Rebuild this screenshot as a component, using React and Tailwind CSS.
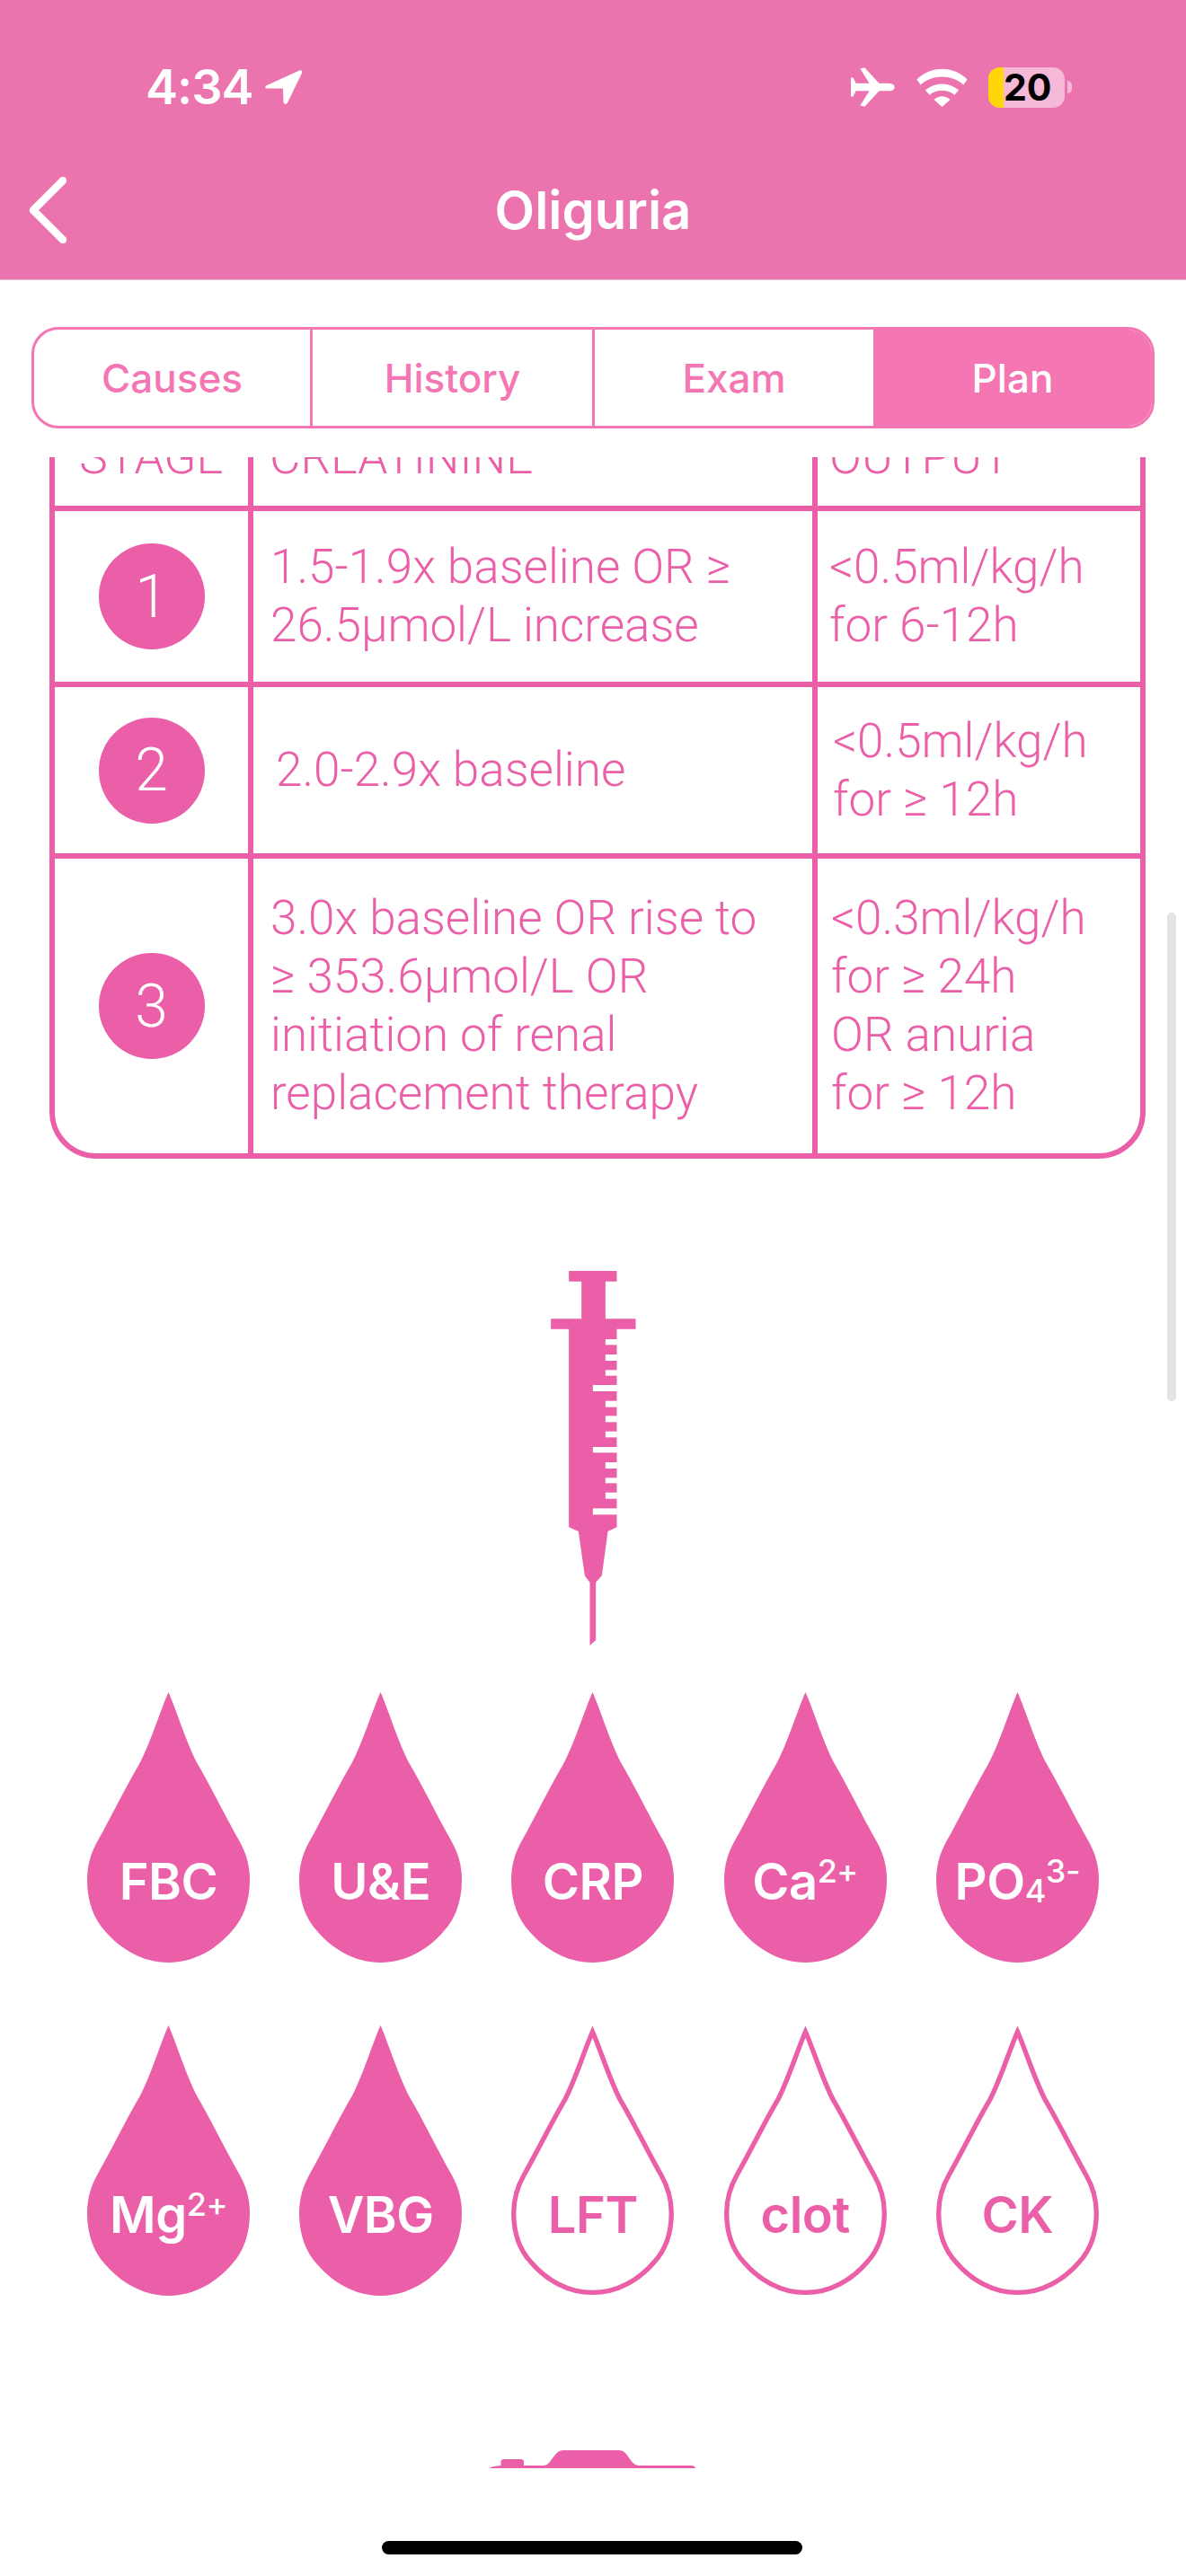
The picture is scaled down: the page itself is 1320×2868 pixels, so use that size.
import React from 'react'

const dropPath = 'M90.5 0 C82 19 70 58 58 80 C46 100 24 144 12 165 C4 179 0 193 0 209 C0 232 7 252 20 266 C37 286 62 301 90.5 301 C119 301 144 286 161 266 C174 252 181 232 181 209 C181 193 177 179 169 165 C157 144 135 100 123 80 C111 58 99 19 90.5 0 Z'

const Sup = ({ children }) => <span className="relative top-[-12px] text-[36px] font-medium">{children}</span>
const Sub = ({ children }) => <span className="relative top-[10px] text-[36px] font-medium">{children}</span>

const drops = [
  { label: 'FBC', filled: true },
  { label: 'U&E', filled: true },
  { label: 'CRP', filled: true },
  { label: <>Ca<Sup>2+</Sup></>, filled: true },
  { label: <>PO<Sub>4</Sub><Sup>3-</Sup></>, filled: true },
  { label: <>Mg<Sup>2+</Sup></>, filled: true },
  { label: 'VBG', filled: true },
  { label: 'LFT', filled: false },
  { label: 'clot', filled: false },
  { label: 'CK', filled: false },
]

const ticks = [
  [342, 300, 19], [342, 351, 21], [342, 403, 19], [300, 453, 21],
  [342, 506, 21], [342, 556, 21], [342, 608, 20], [300, 660, 19],
  [342, 711, 21], [342, 763, 18], [342, 812, 21], [300, 865, 21],
]

function Drop({ label, filled }) {
  return (
    <div className="relative w-[181px] h-[301px]">
      <svg viewBox="0 0 181 301" className="w-full h-full overflow-visible">
        {filled ? (
          <path d={dropPath} fill="#ea5fa7" />
        ) : (
          <path d={dropPath} fill="none" stroke="#ea5fa7" strokeWidth="5.5" strokeMiterlimit="12" transform="translate(2.7 7) scale(0.97 0.965)" />
        )}
      </svg>
      <div className={`absolute left-0 right-0 top-[180px] h-[62px] flex items-center justify-center whitespace-nowrap font-['Inter',sans-serif] font-semibold text-[56px] tracking-[-0.5px] ${filled ? 'text-white' : 'text-[#ea5fa7]'}`}>
        {label}
      </div>
    </div>
  )
}

function Syringe() {
  return (
    <svg viewBox="160 72 284 1254" className="w-[95px] h-[418px] mx-auto">
      <path
        fill="#ea5fa7"
        d="M220 72 H380 V107 H342 V232 H443 V266 H380 V928 L350 942 L330 1090 L310 1112 V1305 L290 1323 V1112 L273 1090 L252 942 L220 928 V266 H160 V232 H262 V107 H220 Z"
      />
      {ticks.map(([x, y, h]) => (
        <rect key={y} x={x} y={y} width={381 - x} height={h} fill="#fff" />
      ))}
    </svg>
  )
}

function Stage({ n }) {
  return (
    <div className="w-[118px] h-[118px] rounded-full bg-[#ea5fa7] flex items-center justify-center text-white text-[66px] font-light">
      {n}
    </div>
  )
}

export default function App() {
  return (
    <div className="relative w-[1320px] h-[2868px] bg-white overflow-hidden font-['Roboto',sans-serif]">
      {/* header */}
      <div className="h-[312px] bg-[#ec74ae] border-b border-[#d9c4ce] flex flex-col text-white">
        <div className="mt-[74px] h-[46px] flex items-center justify-between pl-[162px] pr-[127px]">
          <div className="flex items-center gap-[12px]">
            <span className="font-['Inter',sans-serif] font-semibold text-[54px] leading-none tracking-[-1px]">4:34</span>
            <svg viewBox="291 77 45 42" className="w-[43px] h-[41px]">
              <path fill="#fff" d="M332 78 L293 96 Q291 99 295 99 L313 99 L313.5 115 Q315 119 318 116 L335 81 Q336 77 332 78Z" />
            </svg>
          </div>
          <div className="flex items-center">
            <svg viewBox="141 79 148 132" className="w-[49px] h-[44px]">
              <path fill="#fff" d="M172 82 L188 80 L236 132 H270 Q288 134 288 145 Q288 157 270 158 H236 L188 210 L172 208 L203 158 H158 L149 177 H141 V113 H149 L158 132 H203 Z" />
            </svg>
            <svg viewBox="360 72 170 130" className="w-[57px] h-[43px] ml-[24px]">
              <path fill="#fff" d="M360 110 C405 62 485 62 530 110 L517 128 C478 92 412 92 373 128 Z M389 146 C420 118 470 118 501 146 L487 162 C465 142 425 142 403 162 Z M418 178 C435 163 455 163 472 178 L445 202 Z" />
            </svg>
            <div className="ml-[23px] w-[85px] h-[45px] rounded-[13px] bg-[#f5b8d6] flex">
              <div className="w-[17px] rounded-l-[13px] bg-[#ffd60a]" />
              <span className="font-['Inter',sans-serif] font-bold text-[41px] leading-[45px] text-black w-[51px] text-center">20</span>
            </div>
            <div className="ml-[3px] w-[5px] h-[14px] rounded-r-full bg-[#f5b8d6]" />
          </div>
        </div>
        <div className="mt-[77px] h-[74px] grid grid-cols-[1fr_auto_1fr] items-center">
          <svg viewBox="0 0 42 74" className="ml-[32px] w-[42px] h-[74px]">
            <path d="M38 4 L5 37 L38 70" fill="none" stroke="#fff" strokeWidth="8.5" strokeLinecap="round" strokeLinejoin="round" />
          </svg>
          <span className="font-['Inter',sans-serif] font-semibold text-[58px] leading-none">Oliguria</span>
          <span />
        </div>
      </div>

      {/* tabs */}
      <div className="mt-[52px] mx-[35px] h-[113px] grid grid-cols-[310px_314px_310px_1fr] rounded-[30px] overflow-hidden border-[3px] border-[#f476b3] font-['Inter',sans-serif] font-medium text-[44px] text-[#f476b3]">
        <div className="flex items-center justify-center border-r-[3px] border-[#f476b3]">Causes</div>
        <div className="flex items-center justify-center border-r-[3px] border-[#f476b3]">History</div>
        <div className="flex items-center justify-center">Exam</div>
        <div className="flex items-center justify-center bg-[#f476b3] text-white">Plan</div>
      </div>

      {/* scrolled content, clipped under the tabs */}
      <div className="mt-[32px] h-[2239px] overflow-hidden">
        <div className="-mt-[92px] ml-[55px] w-[1220px] border-[6px] border-[#ea5fa7] rounded-b-[52px] text-[#ea5fa7] font-light text-[53px] leading-[65px]">
          <div className="grid grid-cols-[221px_628px_1fr] h-[146px] border-b-[6px] border-[#ea5fa7]">
            <div className="border-r-[6px] border-[#ea5fa7] text-center pt-[54px] whitespace-nowrap">STAGE</div>
            <div className="border-r-[6px] border-[#ea5fa7] pl-[18px] pt-[54px]">CREATININE</div>
            <div className="pl-[13px] pt-[54px]">OUTPUT</div>
          </div>
          <div className="grid grid-cols-[221px_628px_1fr] h-[196px] border-b-[6px] border-[#ea5fa7]">
            <div className="border-r-[6px] border-[#ea5fa7] flex items-center justify-center"><Stage n="1" /></div>
            <div className="border-r-[6px] border-[#ea5fa7] pl-[19px] flex items-center whitespace-pre-line">{'1.5-1.9x baseline OR ≥\n26.5µmol/L increase'}</div>
            <div className="pl-[13px] flex items-center whitespace-pre-line">{'<0.5ml/kg/h\nfor 6-12h'}</div>
          </div>
          <div className="grid grid-cols-[221px_628px_1fr] h-[191px] border-b-[6px] border-[#ea5fa7]">
            <div className="border-r-[6px] border-[#ea5fa7] flex items-center justify-center"><Stage n="2" /></div>
            <div className="border-r-[6px] border-[#ea5fa7] pl-[25px] flex items-center">2.0-2.9x baseline</div>
            <div className="pl-[17px] flex items-center whitespace-pre-line">{'<0.5ml/kg/h\nfor ≥ 12h'}</div>
          </div>
          <div className="grid grid-cols-[221px_628px_1fr] h-[328px]">
            <div className="border-r-[6px] border-[#ea5fa7] flex items-center justify-center"><Stage n="3" /></div>
            <div className="border-r-[6px] border-[#ea5fa7] pl-[19px] flex items-center whitespace-pre-line">{'3.0x baseline OR rise to\n≥ 353.6µmol/L OR\ninitiation of renal\nreplacement therapy'}</div>
            <div className="pl-[15px] flex items-center whitespace-pre-line">{'<0.3ml/kg/h\nfor ≥ 24h\nOR anuria\nfor ≥ 12h'}</div>
          </div>
        </div>

        <div className="mt-[125px]"><Syringe /></div>

        <div className="mt-[51px] ml-[97px] w-[1126px] grid grid-cols-5 gap-x-[55px] gap-y-[70px]">
          {drops.map((d, i) => <Drop key={i} label={d.label} filled={d.filled} />)}
        </div>

        <svg viewBox="0 0 230 20" className="mt-[172px] ml-[544px] w-[230px] h-[20px]">
          <path fill="#ea5fa7" d="M0 20 Q4 17.5 13.5 17 V13 Q13.5 10 16.5 10 H36 Q39 10 39 13 V17 H61 C70 17 72 0 83 0 H145 C156 0 156 17 168 17 H226 Q229 17 230 20 Z" />
        </svg>
      </div>

      {/* scrollbar + home indicator overlays */}
      <div className="absolute left-[1299px] top-[1016px] w-[10px] h-[544px] rounded-full bg-[#e3e3e3]" />
      <div className="absolute left-[425px] top-[2829px] w-[468px] h-[15px] rounded-full bg-black" />
    </div>
  )
}
